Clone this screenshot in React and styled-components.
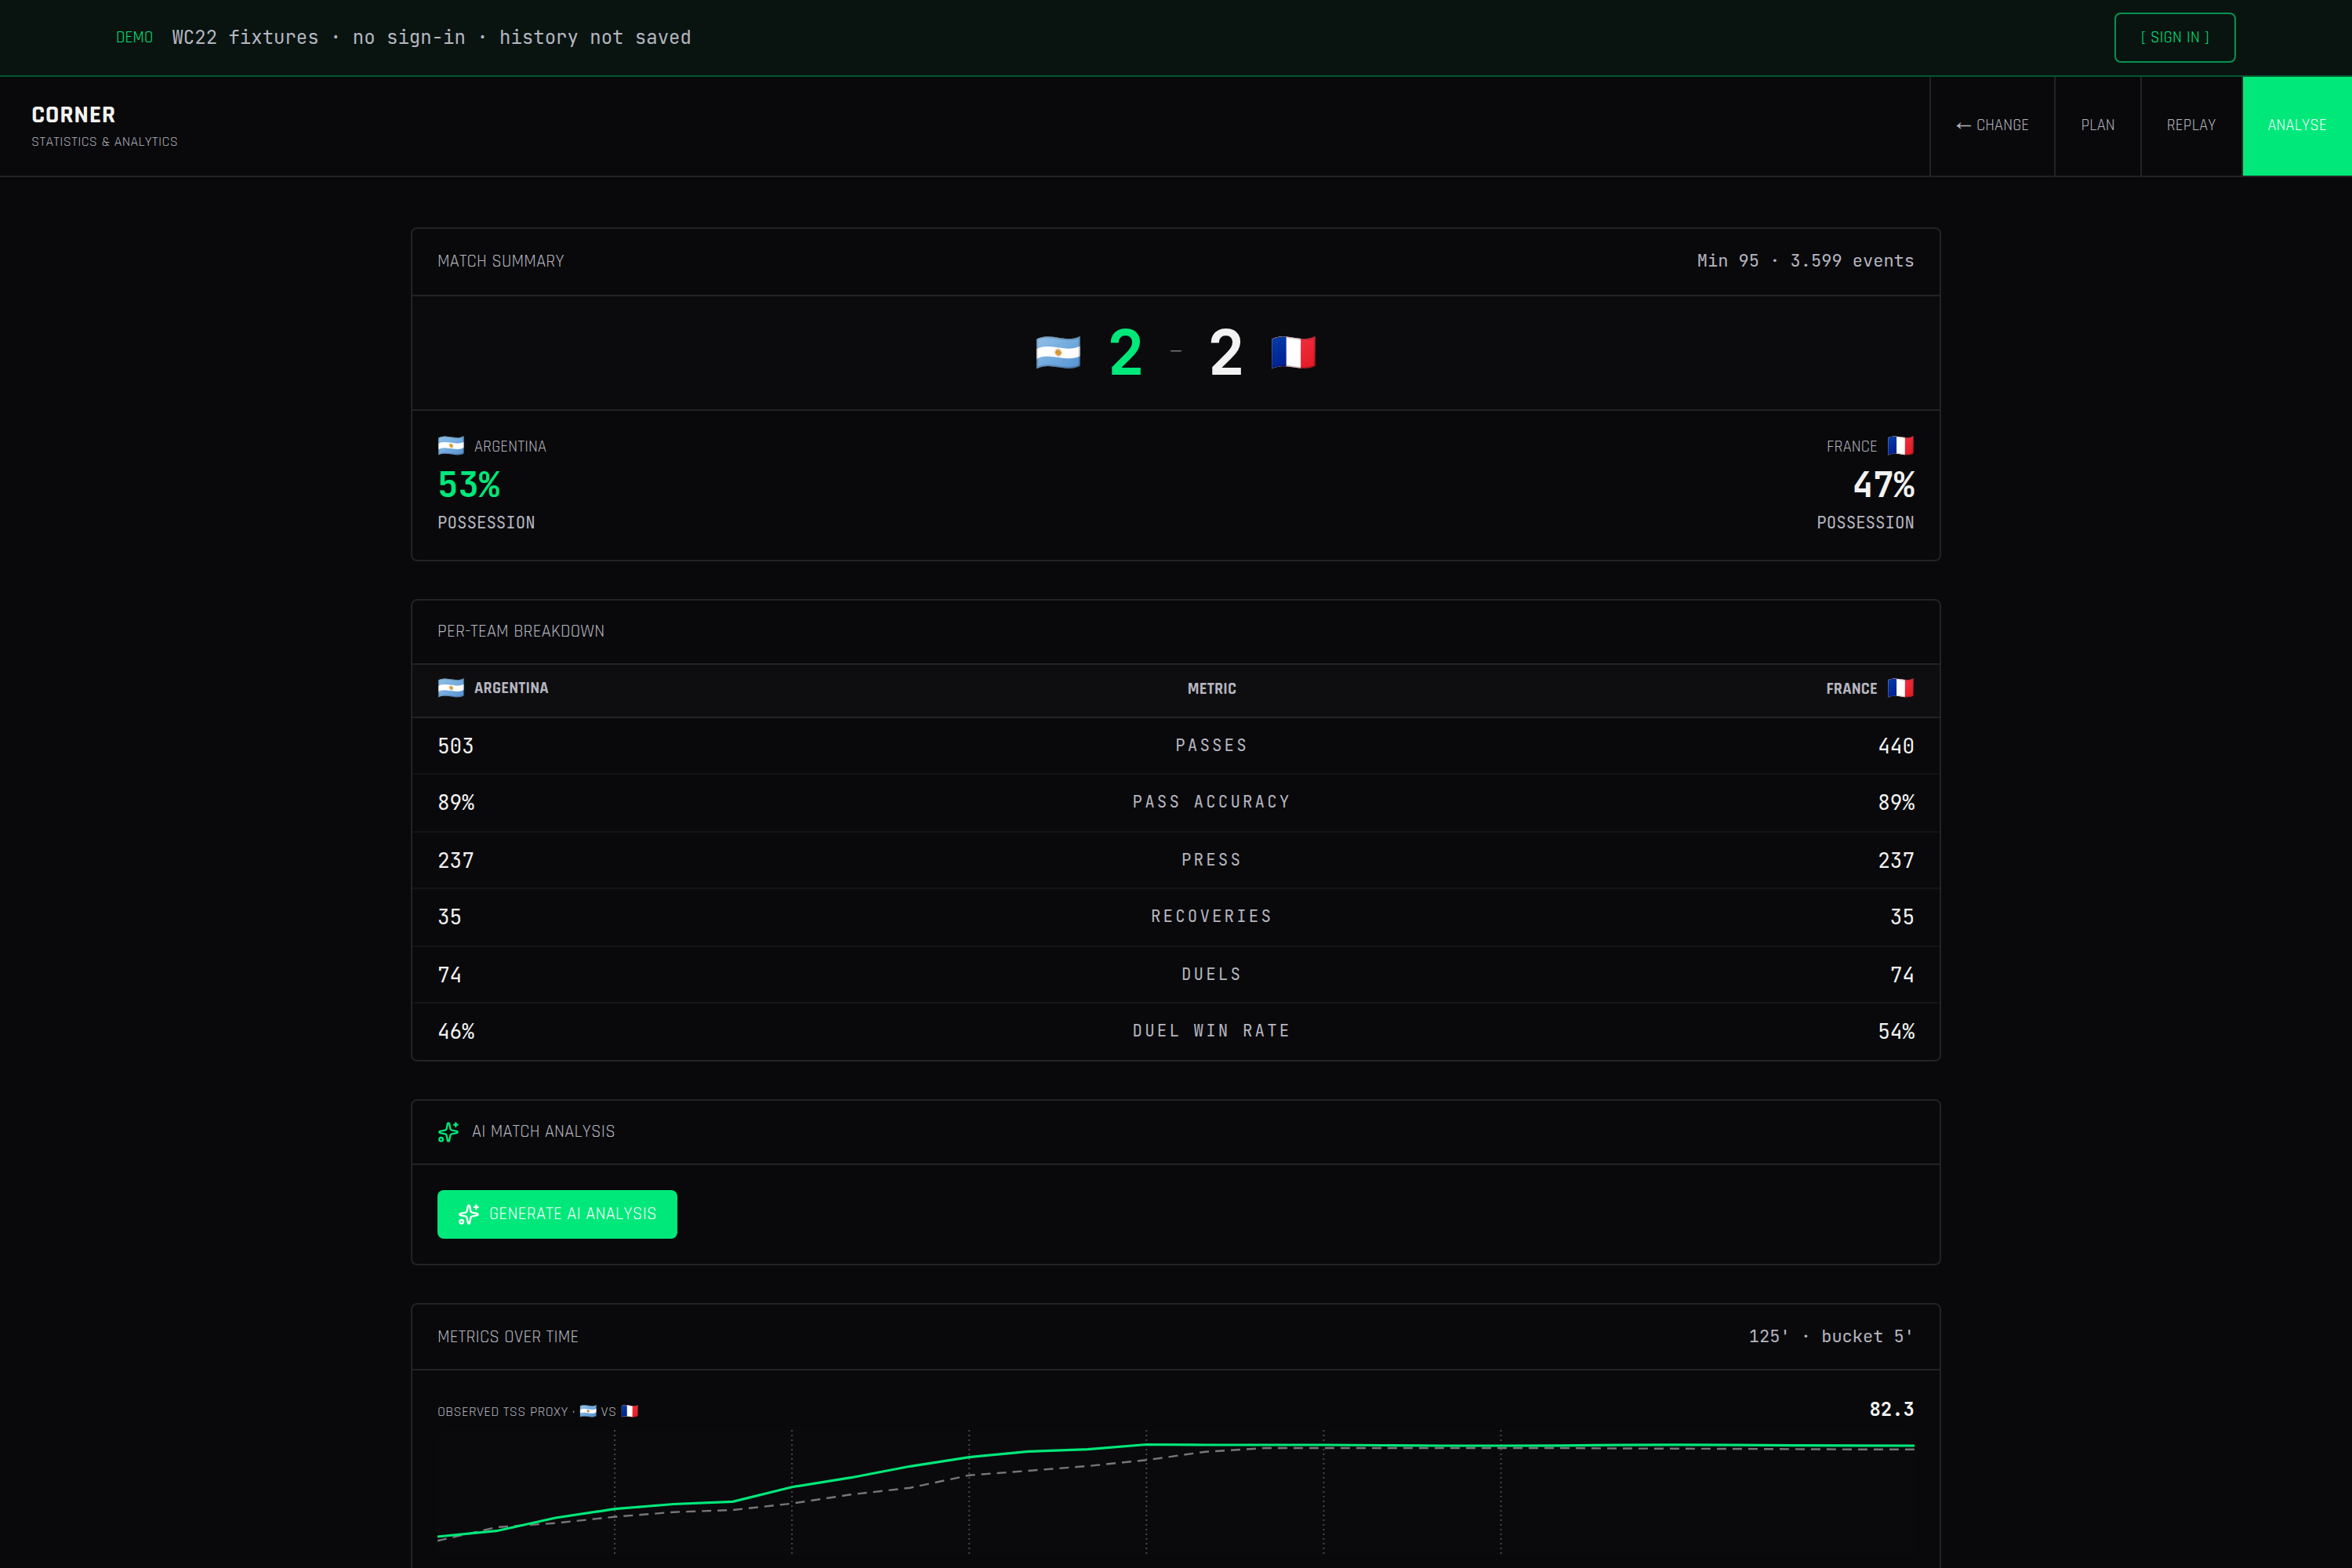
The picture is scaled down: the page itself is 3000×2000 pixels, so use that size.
import React from "react"
import styled, { createGlobalStyle } from "styled-components"
import { Sparkles } from "lucide-react"

const summaryStats = [
  { label: "Passes", home: "503", away: "440" },
  { label: "Pass accuracy", home: "89%", away: "89%" },
  { label: "Press", home: "237", away: "237" },
  { label: "Recoveries", home: "35", away: "35" },
  { label: "Duels", home: "74", away: "74" },
  { label: "Duel win rate", home: "46%", away: "54%" },
]

const homeSeries = [136, 128.7, 112, 100.7, 94.5, 91.3, 72.7, 60.7, 46.3, 34.7, 27.3, 24.7, 18.5, 19, 19, 19, 19.5, 20, 20, 19.8, 19.2, 18.8, 19.2, 19.6, 19.8, 20]
const awaySeries = [141.3, 124, 118.7, 110.7, 104.7, 102, 93.7, 82.3, 73.7, 57.7, 52, 46, 38.3, 27.7, 23, 23, 23, 23, 23, 23, 23.5, 23.8, 24, 24.4, 24.7, 24.8]

const WIDTH = 1884
const HEIGHT = 160
const STEP = WIDTH / 25

const toPoints = (series) => series.map((y, i) => `${(i * STEP).toFixed(1)},${y}`).join(" ")

const App = () => {
  return (
    <>
      <GlobalStyle />
      <DemoBanner>
        <DemoInfo>
          <DemoTag>DEMO</DemoTag>
          <DemoText>WC22 fixtures · no sign-in · history not saved</DemoText>
        </DemoInfo>
        <SignIn type="button">[ SIGN IN ]</SignIn>
      </DemoBanner>

      <Header>
        <Brand>
          <BrandName>CORNER</BrandName>
          <BrandSub>Statistics &amp; Analytics</BrandSub>
        </Brand>
        <Nav aria-label="Sections">
          <NavLink href="#change"><Arrow>←</Arrow> Change</NavLink>
          <NavLink href="#plan">Plan</NavLink>
          <NavLink href="#replay">Replay</NavLink>
          <NavLink href="#analyse" $active>Analyse</NavLink>
        </Nav>
      </Header>

      <Main>
        <Card>
          <CardHeader $height={86} $top={28}>
            <CardTitle>Match summary</CardTitle>
            <CardMeta>Min 95 · 3.599 events</CardMeta>
          </CardHeader>
          <Score>
            <ScoreFlag $size={48}>🇦🇷</ScoreFlag>
            <Goals $home>2</Goals>
            <Dash>—</Dash>
            <Goals>2</Goals>
            <ScoreFlag $size={48}>🇫🇷</ScoreFlag>
          </Score>
          <Possession>
            <Side>
              <Team><Flag $size={28}>🇦🇷</Flag>Argentina</Team>
              <Percent $home>53%</Percent>
              <PercentLabel>Possession</PercentLabel>
            </Side>
            <Side $end>
              <Team>France<Flag $size={28}>🇫🇷</Flag></Team>
              <Percent>47%</Percent>
              <PercentLabel>Possession</PercentLabel>
            </Side>
          </Possession>
        </Card>

        <Card>
          <CardHeader>
            <CardTitle>Per-team breakdown</CardTitle>
          </CardHeader>
          <TableHead>
            <Team $bold><Flag $size={28}>🇦🇷</Flag><HomeName>Argentina</HomeName></Team>
            <MetricHead>Metric</MetricHead>
            <Team $bold $end>France<Flag $size={28}>🇫🇷</Flag></Team>
          </TableHead>
          {summaryStats.map(({ label, home, away }) => (
            <TableRow key={label}>
              <Value>{home}</Value>
              <Metric>{label}</Metric>
              <Value $end>{away}</Value>
            </TableRow>
          ))}
        </Card>

        <Card>
          <CardHeader>
            <IconTitle>
              <Sparkles size={28} color="#00e87a" />
              <CardTitle>AI match analysis</CardTitle>
            </IconTitle>
          </CardHeader>
          <CardBody>
            <Generate type="button">
              <Sparkles size={28} />
              Generate AI analysis
            </Generate>
          </CardBody>
        </Card>

        <Card>
          <CardHeader $height={84} $top={28}>
            <CardTitle>Metrics over time</CardTitle>
            <CardMeta>125' · bucket 5'</CardMeta>
          </CardHeader>
          <CardBody>
            <ChartHead>
              <ChartLabel>Observed TSS proxy · 🇦🇷 vs 🇫🇷</ChartLabel>
              <ChartValue>82.3</ChartValue>
            </ChartHead>
            <Chart viewBox={`0 0 ${WIDTH} ${HEIGHT}`}>
              {[3, 6, 9, 12, 15, 18].map((i) => (
                <line key={i} x1={i * STEP} x2={i * STEP} y1="0" y2={HEIGHT} stroke="#47474b" strokeWidth="2" strokeDasharray="2 4" />
              ))}
              <polyline points={toPoints(awaySeries)} fill="none" stroke="#77777b" strokeWidth="2.4" strokeDasharray="12 8" />
              <polyline points={toPoints(homeSeries)} fill="none" stroke="#00e87a" strokeWidth="3.2" />
            </Chart>
          </CardBody>
        </Card>
      </Main>
    </>
  )
}

const GlobalStyle = createGlobalStyle`
  * {
    box-sizing: border-box;
    margin: 0;
    padding: 0;
  }

  :root {
    --green: #00e87a;
    --bg: #09090b;
    --line: #232325;
    --muted: #b6b6c0;
    --white: #f2f2f2;
    --display: Rajdhani, "Roboto Condensed", Roboto, sans-serif;
    --mono: "JetBrains Mono", "DejaVu Sans Mono", monospace;
  }

  body {
    background: var(--bg);
    color: var(--muted);
    font-family: var(--display);
    overflow: hidden;
  }
`

const DemoBanner = styled.div`
  display: flex;
  align-items: center;
  justify-content: space-between;
  height: 98px;
  padding: 0 148px;
  background: #091411;
  border-bottom: 2px solid #04562f;
`

const DemoInfo = styled.div`
  display: flex;
  align-items: center;
  gap: 24px;
`

const DemoTag = styled.span`
  font-size: 20.4px;
  line-height: 26px;
  letter-spacing: 0.01em;
  color: var(--green);
`

const DemoText = styled.p`
  font: 400 24px/36px var(--mono);
`

const SignIn = styled.button`
  height: 64px;
  padding: 0 32px;
  background: none;
  border: 2px solid #049350;
  border-radius: 8px;
  color: var(--green);
  font: 400 20.4px/26px var(--display);
  letter-spacing: 0.015em;
`

const Header = styled.header`
  display: flex;
  justify-content: space-between;
  height: 128px;
  border-bottom: 2px solid var(--line);
`

const Brand = styled.div`
  padding: 32px 40px 0;
  text-transform: uppercase;
`

const BrandName = styled.h1`
  font-size: 32px;
  line-height: 33px;
  font-weight: 700;
  letter-spacing: 0.02em;
  color: var(--white);
`

const BrandSub = styled.p`
  margin-top: 6px;
  font-size: 18px;
  line-height: 23px;
  letter-spacing: 0.02em;
`

const Nav = styled.nav`
  display: flex;
`

const NavLink = styled.a`
  display: flex;
  align-items: center;
  gap: 6px;
  padding: 0 32px 2px;
  border-left: 2px solid var(--line);
  background: ${(p) => (p.$active ? "var(--green)" : "transparent")};
  color: ${(p) => (p.$active ? "#fff" : "var(--muted)")};
  font-size: 20.4px;
  line-height: 26px;
  letter-spacing: 0.01em;
  text-transform: uppercase;
  text-decoration: none;
`

const Arrow = styled.span`
  font-family: "Noto Sans Math", "Liberation Sans", sans-serif;
  font-size: 20px;
  letter-spacing: 0;
`

const Main = styled.main`
  display: flex;
  flex-direction: column;
  gap: 48px;
  width: 1952px;
  margin: 64px auto 0;
`

const Card = styled.section`
  border: 2px solid var(--line);
  border-radius: 8px;
  overflow: hidden;
`

const CardHeader = styled.div`
  display: flex;
  align-items: baseline;
  justify-content: space-between;
  height: ${(p) => p.$height || 82}px;
  padding: ${(p) => p.$top || 26}px 32px 0;
  border-bottom: 2px solid var(--line);
`

const CardTitle = styled.h2`
  font-size: 22.4px;
  line-height: 28px;
  font-weight: 400;
  letter-spacing: 0.01em;
  text-transform: uppercase;
`

const CardMeta = styled.span`
  font: 400 22px/24px var(--mono);
`

const IconTitle = styled.div`
  display: flex;
  align-items: center;
  gap: 16px;
`

const CardBody = styled.div`
  padding: 32px;
`

const Flag = styled.span`
  font-family: var(--display);
  font-weight: 400;
  font-size: ${(p) => p.$size}px;
  line-height: 1;
  letter-spacing: 0;
`

const ScoreFlag = styled(Flag)`
  padding-top: 3px;
`

const Score = styled.div`
  display: flex;
  align-items: center;
  justify-content: center;
  gap: 32px;
  height: 146px;
  background: #0b0b0d;
  border-bottom: 2px solid var(--line);
`

const Goals = styled.span`
  padding-bottom: 2px;
  font: 700 80px/80px var(--mono);
  color: ${(p) => (p.$home ? "var(--green)" : "var(--white)")};
`

const Dash = styled.span`
  width: 16px;
  padding-bottom: 4px;
  font-size: 30px;
  line-height: 30px;
  text-align: center;
  color: #8a8a93;
`

const Possession = styled.div`
  display: flex;
  justify-content: space-between;
  padding: 32px;
`

const Side = styled.div`
  display: flex;
  flex-direction: column;
  align-items: ${(p) => (p.$end ? "flex-end" : "flex-start")};
`

const Team = styled.div`
  display: flex;
  align-items: center;
  justify-content: ${(p) => (p.$end ? "flex-end" : "flex-start")};
  gap: 12px;
  height: 28px;
  font-size: 20.4px;
  line-height: 26px;
  font-weight: ${(p) => (p.$bold ? 700 : 400)};
  letter-spacing: 0.01em;
  text-transform: uppercase;
`

const HomeName = styled.span`
  padding-bottom: 3px;
`

const Percent = styled.strong`
  margin-top: 12px;
  font: 700 44px/44px var(--mono);
  color: ${(p) => (p.$home ? "var(--green)" : "var(--white)")};
`

const PercentLabel = styled.span`
  margin-top: 12px;
  font: 400 20.8px/30px var(--mono);
  text-transform: uppercase;
`

const TableHead = styled.div`
  display: grid;
  grid-template-columns: 768px 440px 1fr;
  align-items: center;
  height: 68px;
  padding: 0 32px 4px;
  background: #0e0e10;
  border-bottom: 2px solid var(--line);
`

const MetricHead = styled.span`
  font-size: 20.4px;
  line-height: 26px;
  font-weight: 700;
  letter-spacing: 0.01em;
  text-align: center;
  text-transform: uppercase;
`

const TableRow = styled.div`
  display: grid;
  grid-template-columns: 768px 440px 1fr;
  grid-template-rows: 70px;
  align-items: center;
  height: 72px;
  padding: 0 32px;
  border-bottom: 2px solid #141416;

  &:nth-child(even) {
    height: 74px;
  }

  &:last-child {
    height: 72px;
    border-bottom: none;
  }
`

const Value = styled.span`
  font: 400 26px/39px var(--mono);
  color: var(--white);
  text-align: ${(p) => (p.$end ? "right" : "left")};
`

const Metric = styled.span`
  font: 400 20.8px/30px var(--mono);
  letter-spacing: 0.15em;
  text-align: center;
  text-transform: uppercase;
`

const Generate = styled.button`
  display: flex;
  align-items: center;
  gap: 12px;
  height: 62px;
  padding: 0 26px;
  border: none;
  border-radius: 8px;
  background: var(--green);
  color: #fff;
  font: 400 22.4px/28px var(--display);
  letter-spacing: 0.3px;
  text-transform: uppercase;
`

const ChartHead = styled.div`
  display: flex;
  align-items: baseline;
  justify-content: space-between;
  margin-bottom: 8px;
`

const ChartLabel = styled.span`
  font-size: 18px;
  line-height: 23px;
  letter-spacing: 0.02em;
  text-transform: uppercase;
`

const ChartValue = styled.strong`
  font: 700 24px/36px var(--mono);
  color: var(--white);
`

const Chart = styled.svg`
  display: block;
  width: 100%;
  height: 160px;
  border-radius: 8px;
  background: #0a0a0c;
`

export default App
